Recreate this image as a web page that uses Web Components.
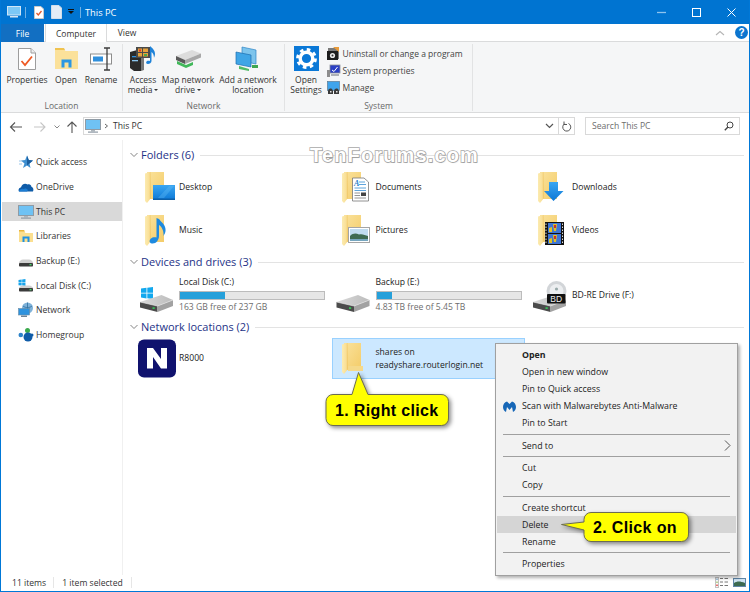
<!DOCTYPE html>
<html><head><meta charset="utf-8">
<style>
html,body{margin:0;padding:0;background:#fff}
body{width:750px;height:592px;overflow:hidden;font:8.6px "Open Sans","Noto Sans",sans-serif;color:#222}
</style></head>
<body>
<explorer-window>
  <title-bar slot="top" label="This PC"></title-bar>
  <ribbon-tabs slot="top"></ribbon-tabs>
  <ribbon-bar slot="top">
    <ribbon-group label="Location" w="122" pad="6" gap="8">
      <ribbon-button icon="properties" w="40">Properties</ribbon-button>
      <ribbon-button icon="open" w="22">Open</ribbon-button>
      <ribbon-button icon="rename" w="32">Rename</ribbon-button>
    </ribbon-group>
    <ribbon-group label="Network" w="162" pad="6" gap="4">
      <ribbon-button icon="media" w="28" caret>Access<br>media</ribbon-button>
      <ribbon-button icon="mapdrive" w="54" caret>Map network<br>drive</ribbon-button>
      <ribbon-button icon="addnet" w="58">Add a network<br>location</ribbon-button>
    </ribbon-group>
    <ribbon-group label="System" w="188" pad="5" gap="5">
      <ribbon-button icon="settings" w="32">Open<br>Settings</ribbon-button>
      <ribbon-list>
        <ribbon-small icon="uninstall">Uninstall or change a program</ribbon-small>
        <ribbon-small icon="sysprop">System properties</ribbon-small>
        <ribbon-small icon="manage">Manage</ribbon-small>
      </ribbon-list>
    </ribbon-group>
  </ribbon-bar>
  <address-bar slot="top" label="This PC" search="Search This PC"></address-bar>
  <nav-pane slot="left">
    <nav-item icon="n-star">Quick access</nav-item>
    <nav-item icon="n-cloud">OneDrive</nav-item>
    <nav-item icon="n-pc" selected>This PC</nav-item>
    <nav-item icon="n-lib">Libraries</nav-item>
    <nav-item icon="n-hdd">Backup (E:)</nav-item>
    <nav-item icon="n-win">Local Disk (C:)</nav-item>
    <nav-item icon="n-net">Network</nav-item>
    <nav-item icon="n-home">Homegroup</nav-item>
  </nav-pane>
  <content-pane slot="main">
    <item-group label="Folders (6)" line="54" row="43">
      <file-tile icon="f-desktop">Desktop</file-tile>
      <file-tile icon="f-docs">Documents</file-tile>
      <file-tile icon="f-down">Downloads</file-tile>
      <file-tile icon="f-music">Music</file-tile>
      <file-tile icon="f-pics">Pictures</file-tile>
      <file-tile icon="f-video">Videos</file-tile>
    </item-group>
    <item-group label="Devices and drives (3)" row="44">
      <drive-tile icon="d-c" name="Local Disk (C:)" free="163 GB free of 237 GB" pct="31"></drive-tile>
      <drive-tile icon="d-e" name="Backup (E:)" free="4.83 TB free of 5.45 TB" pct="11"></drive-tile>
      <file-tile icon="d-bd">BD-RE Drive (F:)</file-tile>
    </item-group>
    <item-group label="Network locations (2)" row="41">
      <file-tile icon="n-logo">R8000</file-tile>
      <file-tile icon="f-plain" selected>shares on<br>readyshare.routerlogin.net</file-tile>
    </item-group>
  </content-pane>
  <status-bar slot="bottom"></status-bar>

  <water-mark slot="over">TenForums.com</water-mark>
  <context-menu slot="over">
    <menu-item bold>Open</menu-item>
    <menu-item>Open in new window</menu-item>
    <menu-item>Pin to Quick access</menu-item>
    <menu-item mb>Scan with Malwarebytes Anti-Malware</menu-item>
    <menu-item>Pin to Start</menu-item>
    <menu-sep></menu-sep>
    <menu-item arrow>Send to</menu-item>
    <menu-sep></menu-sep>
    <menu-item>Cut</menu-item>
    <menu-item>Copy</menu-item>
    <menu-sep></menu-sep>
    <menu-item>Create shortcut</menu-item>
    <menu-item hot>Delete</menu-item>
    <menu-item>Rename</menu-item>
    <menu-sep></menu-sep>
    <menu-item>Properties</menu-item>
  </context-menu>
  <call-out slot="over" kind="one">1. Right click</call-out>
  <call-out slot="over" kind="two">2. Click on</call-out>
</explorer-window>

<script>
const hdd=(x=0,y=0)=>`<g transform="translate(${x} ${y})"><path d="M0 7 21.5 0 33 5 17.500 11Z" fill="url(#hg)"/><path d="M0 7 17.500 11V17L0 12.500Z" fill="#4b4b4b"/><path d="M17.500 11 33 5V11L17.500 17Z" fill="#a2a2a2"/><path d="M0 7 17.500 11 33 5" fill="none" stroke="#e9e9e9" stroke-width=".6"/><rect x="12.500" y="12.300" width="2.200" height="1.600" fill="#35d05a"/></g>`;
const grads=`<defs><linearGradient id="hg" x1="0" y1="0" x2="1" y2="0"><stop offset="0" stop-color="#dadada"/><stop offset="1" stop-color="#bcbcbc"/></linearGradient>
<linearGradient id="fb" x1="0" y1="0" x2="1" y2="1"><stop offset="0" stop-color="#fae29c"/><stop offset="1" stop-color="#f4cc68"/></linearGradient>
<linearGradient id="ff" x1="0" y1="0" x2="1" y2="0"><stop offset="0" stop-color="#fcebb0"/><stop offset=".7" stop-color="#f9df96"/><stop offset="1" stop-color="#eec25c"/></linearGradient>
<linearGradient id="bl" x1="0" y1="0" x2="0" y2="1"><stop offset="0" stop-color="#3aa6f2"/><stop offset="1" stop-color="#0c78d6"/></linearGradient></defs>`;
const folder=`<path d="M11 6H28V33H11Z" fill="url(#fb)"/><path d="M9 7.500 14.500 6 15 32 11 37 9 35Z" fill="url(#ff)"/>`;
const s16=(b)=>({w:16,h:16,vb:'0 0 16 16',b});
const t43=(b)=>({w:43,h:43,vb:'0 0 43 43',b});
const winLogo=(x,y,s,c='#10a5ec')=>`<g fill="${c}" transform="translate(${x} ${y}) scale(${s})"><path d="M0 1.600 5.500.8V5.700H0ZM6.300.7 12 0V5.700H6.300ZM0 6.500H5.500V11.400L0 10.600ZM6.300 6.500H12V12L6.300 11.300Z"/></g>`;
const ICONS={
 'tb-pc':{w:14,h:12,vb:'0 0 14 12',b:`<rect x=".5" y=".5" width="13" height="8.500" fill="#7cc8f6" stroke="#cfe6f7"/><rect x="3" y="10" width="8" height="1.500" fill="#d6e6f2"/>`},
 'tb-check':{w:10,h:13,vb:'0 0 10 13',b:`<path d="M.5.500H7L9.500 3V12.500H.5Z" fill="#fff" stroke="#c9c9c9"/><path d="M2.500 7 4.300 9 7.500 5" fill="none" stroke="#e2592c" stroke-width="1.300"/>`},
 'tb-doc':{w:11,h:14,vb:'0 0 11 14',b:`<path d="M.5.500H8L10.500 3V13.500H.5Z" fill="#e3ecf6" stroke="#d2deeb"/>`},
 properties:{w:18,h:22,vb:'0 0 18 22',b:`<path d="M.5.500H13L17.500 5V21.500H.5Z" fill="#fff" stroke="#9d9d9d"/><path d="M13 .5V5H17.500" fill="#eee" stroke="#9d9d9d"/><path d="M3.500 13 7 17 14 8.500" fill="none" stroke="#ee5a24" stroke-width="1.800"/>`},
 open:{w:23,h:21,vb:'0 0 23 21',b:`<path d="M0 1H9L10.500 3H23V21H0Z" fill="#fbe19a"/><path d="M0 0H9L10 2H0Z" fill="#f0c350"/><path d="M6.500 19.500V11.500H16.500V19.500H13.500V14.500H9.500V19.500Z" fill="#2b97e3"/>`},
 rename:{w:23,h:24,vb:'0 0 23 24',b:`<rect x=".5" y="7" width="21" height="10" fill="#fff" stroke="#8d8d8d"/><rect x="3" y="9.500" width="10" height="5" fill="#2f8fdc"/><path d="M14 1H20M14 23H20M17 1V23" stroke="#3d3d3d" stroke-width="1.300" fill="none"/>`},
 media:{w:26,h:25,vb:'0 0 26 25',b:`<path d="M0 6 11 3V25H4L0 22Z" fill="#2b2b2b"/><path d="M11 3 14 5V24L11 25Z" fill="#777"/><rect x="2" y="10" width="6" height="1.300" fill="#2f8fdc"/><rect x="2" y="14" width="6" height="1.300" fill="#8cc6ef"/><path d="M6 1H20V12H6Z" fill="#4a4a4a"/><path d="M8 2.500H12V6H8ZM13 2.500H18V6H13ZM8 7H12V10.500H8ZM13 7H18V10.500H13Z" fill="#e5a13a"/><path d="M9 3.500H11V5.500H9Z" fill="#d33"/><path d="M14 8H17V10H14Z" fill="#49a84a"/><path d="M20 0C22 2 25 4 25 8 25 10 24 11 24 12 24 9 23 7 21.500 6V15C21.500 17 19.500 18 18 18 16 18 15.500 16 17 15 18 14.500 19 14.500 20 15Z" fill="#1e82d8"/>`},
 mapdrive:{w:25,h:18,vb:'0 0 25 18',b:`<path d="M0 6 16 0 25 3.500 9 10Z" fill="#dcdcdc"/><path d="M0 6 9 10V14L0 10Z" fill="#5a5a5a"/><path d="M9 10 25 3.500V7.500L9 14Z" fill="#a8a8a8"/><path d="M1 11 10 15 17 12 17 15 10 18 1 14Z" fill="#41b85a"/>`},
 addnet:{w:24,h:24,vb:'0 0 24 24',b:`<path d="M6 0 20 3V17L6 14Z" fill="#7dc4ec" stroke="#2f85c6" stroke-width=".7"/><path d="M0 5 15 8V20L0 17Z" fill="#3fa5e6" stroke="#1d6fb0" stroke-width=".7"/><path d="M3 19 13 22V24L3 22Z" fill="#50bb66"/><path d="M16 18H22V21H16Z" fill="#3ea651"/>`},
 settings:{w:25,h:25,vb:'0 0 25 25',b:`<rect width="25" height="25" fill="#0a78d7"/><circle cx="12.500" cy="12.500" r="6.300" fill="none" stroke="#fff" stroke-width="3.400"/><circle cx="12.500" cy="12.500" r="9" fill="none" stroke="#fff" stroke-width="2.800" stroke-dasharray="3.600 3.470"/>`},
 uninstall:{w:13,h:13,vb:'0 0 13 13',b:`<rect x="1" y="1" width="11" height="11" fill="#7a7a7a"/><path d="M6 0H12V5Z" fill="#e89b3c"/><rect x="0" y="4" width="11" height="9" fill="#1d1d1d"/><circle cx="5.500" cy="8.500" r="2.600" fill="#e8e8e8"/><circle cx="5.500" cy="8.500" r="1" fill="#333"/>`},
 sysprop:{w:13,h:13,vb:'0 0 13 13',b:`<rect x="3" y="1" width="10" height="8" fill="#2a3fc4" stroke="#8b9099" stroke-width=".8"/><path d="M5 6 7 7.500 10.500 3" stroke="#fff" fill="none" stroke-width="1"/><path d="M0 6H3V13H0Z" fill="#8d8d8d"/><rect x="4" y="10" width="8" height="2" fill="#adb1b7"/>`},
 manage:{w:13,h:13,vb:'0 0 13 13',b:`<rect x=".5" y=".5" width="12" height="9" fill="#3fa4ec" stroke="#5b7b94" stroke-width=".7"/><path d="M1 13V10C1 8 3 7.500 4 7.500S6 9 6 10V13ZM7 13V10C7 8 9 7.500 10 7.500S12 9 12 10V13Z" fill="#3a3a3a"/><rect x="3" y="10" width="1.500" height="1.500" fill="#e5e5e5"/><rect x="9" y="10" width="1.500" height="1.500" fill="#e5e5e5"/>`},
 'n-star':s16(`<path d="M9 1.500 10.800 6 15 6.500 11.500 9.500 12.500 14 9 11.500 5 14 6.500 9.500 3 6.500 7.200 6Z" fill="#3e8fd0"/><path d="M9 1.500 10.800 6 15 6.500 11.500 9.500 9 11.500Z" fill="#1c5e9e"/><path d="M1 7H4M1 10H4" stroke="#9ac6ea"/>`),
 'n-cloud':s16(`<path d="M1 12.500C0 11 1 8.500 3 8.500 3.500 5.500 7 3.500 9.500 5.500 12 4.500 13.500 6.500 13.500 8 15 8 16 10.500 15 12.500Z" fill="#0f5ca8"/><path d="M1 12.500C1.500 10.500 3.500 9.500 5.500 10 7 9 9 9.500 10 11L9 12.500Z" fill="#1d7dd3"/>`),
 'n-pc':s16(`<rect x=".5" y="1.500" width="15" height="10" fill="#6fc2f4" stroke="#8f9ba5"/><rect x="6" y="12" width="4" height="1.500" fill="#aeb6bd"/><rect x="3" y="13.500" width="10" height="1.200" fill="#8f9ba5"/>`),
 'n-lib':s16(`<path d="M1 3H6L7.500 5H15V14H1Z" fill="#fbdf90"/><path d="M1 2H6L7 3.500H1Z" fill="#e9b53b"/><path d="M4.500 14V8.500H11.500V14H9.500V10.500H6.500V14Z" fill="#1e91e3"/>`),
 'n-hdd':s16(`<path d="M1 10C1 8.500 3 6.500 5 6.500H11C13 6.500 15 8.500 15 10Z" fill="#d0d0d0"/><rect x="1" y="10" width="14" height="3.500" rx=".8" fill="#3b3b3b"/><rect x="11.500" y="11" width="2" height="1.300" fill="#48d86a"/>`),
 'n-win':s16(`${winLogo(0.5,1,0.58,'#18a4ea')}<path d="M1 10C1 9 3 7.500 5 7.500H11C13 7.500 15 9 15 10Z" fill="#d0d0d0"/><rect x="1" y="10" width="14" height="3.500" rx=".8" fill="#3b3b3b"/><rect x="11.500" y="11" width="2" height="1.300" fill="#48d86a"/>`),
 'n-net':s16(`<circle cx="9.500" cy="6" r="5.500" fill="#7fb2d9"/><path d="M5 4C7 6 12 6 14 4M9.500.5V11" stroke="#2f6e9e" stroke-width=".8" fill="none"/><rect x=".5" y="6.500" width="11" height="6.500" fill="#2e93de" stroke="#6b8ca5" stroke-width=".6"/><rect x="3" y="13.500" width="6" height="1.500" fill="#6e8496"/>`),
 'n-home':s16(`<circle cx="2.800" cy="8" r="2.300" fill="#2d83c9"/><circle cx="9.500" cy="3.500" r="2.500" fill="#3aaa4c"/><circle cx="10" cy="10" r="4.500" fill="#0f5ca8"/><circle cx="14" cy="8" r="1.500" fill="#0f5ca8"/>`),
 'f-desktop':t43(`${folder}<rect x="17" y="19" width="22" height="15" fill="url(#bl)"/><path d="M17 32.500H39V34H17Z" fill="#0d5fa8"/><path d="M22 32 33 20H38L28 32Z" fill="#63bdf6" opacity=".35"/>`),
 'f-docs':t43(`${folder}<path d="M19.500 12H31L35.500 16V35H19.500Z" fill="#fff" stroke="#777" stroke-width=".8"/><text x="21" y="20" font-family="Liberation Serif" font-style="italic" font-weight="700" font-size="8" fill="#2d80c8">A</text><path d="M26 16H32M26 18.500H33M21.500 22H33M21.500 24.500H33" stroke="#4d9ad8" stroke-width=".9"/><path d="M21.500 27H27M21.500 29.500H27M21.500 32H33" stroke="#888" stroke-width=".9"/><rect x="28" y="26.500" width="5" height="3.500" fill="#444"/>`),
 'f-down':t43(`${folder}<path d="M20 16H29V25H34.500L24.500 35 15 25H20Z" fill="url(#bl)"/>`),
 'f-music':t43(`${folder}<path d="M23 10V27C23 31 20 35 16 34.500 12.500 34 13 30 16.500 28.500 18 28 19.500 28 20.500 28.500V9L23 10C25 13 29 15 29.500 20 30 23 28.500 25 27.500 27 28 22 26 18 23 16Z" fill="#1e8ae0"/>`),
 'f-pics':t43(`${folder}<rect x="15.500" y="18.500" width="21" height="15" fill="#fff" stroke="#a5a5a5"/><rect x="17" y="20" width="18" height="12" fill="#c0dcf0"/><path d="M17 27C20 24 23 24 26 25.500 29 24.500 32 26 35 27V32H17Z" fill="#3e6b52"/><path d="M17 30H35V32H17Z" fill="#76a6bf"/>`),
 'f-video':t43(`${folder}<rect x="16" y="13" width="19" height="23" fill="#111"/><rect x="19" y="14" width="13" height="10" fill="#3f75d5"/><rect x="19" y="25" width="13" height="10" fill="#3f75d5"/><path d="M24 15H28L27 22H25ZM20 19 23 18V23H20ZM24 26H28L27 33H25ZM20 30 23 29V34H20Z" fill="#e3c223"/><path d="M25 16H27V19H25ZM25 27H27V30H25Z" fill="#c8302a"/><path d="M17 14.500V35M33.500 14.500V35" stroke="#ddd" stroke-width="1" stroke-dasharray="1.500 1.500"/>`),
 'f-plain':t43(`<path d="M11 6H28V33H11Z" fill="url(#fb)"/><path d="M9 7.500 14.500 6 15 32 11 37 9 35Z" fill="url(#ff)"/><path d="M15 29H30V34H15Z" fill="#f5d98a"/>`),
 'd-c':t43(`${winLogo(5,13,1,'#12a8ee')}${hdd(4,21)}`),
 'd-e':t43(hdd(4.500,21)),
 'd-bd':t43(`<circle cx="27.500" cy="17" r="10" fill="#d2d5d8"/><circle cx="27.500" cy="17" r="7" fill="#eceef0"/><circle cx="27.500" cy="15" r="1.600" fill="#9aa"/>${hdd(4,21)}<rect x="18" y="20" width="18.500" height="9.500" rx="1" fill="#111"/><text x="27.200" y="28" text-anchor="middle" font-family="Liberation Sans" font-size="8.500" fill="#eee">BD</text>`),
 'n-logo':t43(`<rect x="2" y="2.500" width="38" height="38" rx="6" fill="#10126e"/><path d="M11 31.500V11H17L25 22V11H31V31.500H25L17 20V31.500Z" fill="#fff"/>`),
 'mb':{w:13,h:13,vb:'0 0 13 13',b:`<path d="M6.500 4 4 1.500C1.500 2 0 4.500 0 7 0 9.500 1.500 11.500 3 12L4 7 6.500 10 9 7 10 12C11.500 11.500 13 9.500 13 7 13 4.500 11.500 2 9 1.500Z" fill="#1767b7"/>`},
 'v-det':{w:13,h:11,vb:'0 0 13 11',b:`<rect x=".5" y=".5" width="3" height="10" fill="#fff" stroke="#c2c2c2"/><rect x="1.200" y="1.500" width="1.600" height="1.600" fill="#8fb3d3"/><rect x="1.200" y="4.500" width="1.600" height="1.600" fill="#a9c77a"/><rect x="1.200" y="7.500" width="1.600" height="1.600" fill="#e0524d"/><path d="M5 1.500H8M9.500 1.500H13M5 5H8M9.500 5H13M5 8.500H8M9.500 8.500H13" stroke="#777"/>`},
 'v-lg':{w:13,h:9,vb:'0 0 13 9',b:`<rect x=".5" y=".5" width="12" height="8" fill="#cfe3f3" stroke="#5f86a8"/><path d="M1 5C4 3 7 3 12 5V8H1Z" fill="#3c6a50"/>`},
};
function def(tag,css,html,init){
  customElements.define(tag,class extends HTMLElement{
    connectedCallback(){
      if(this.shadowRoot)return;
      const r=this.attachShadow({mode:'open'});
      r.innerHTML=`<style>${css}</style>`+(typeof html==='function'?html(this):html);
      if(init)init(this,r);
    }
  });
}
const svgIcon=n=>{const i=ICONS[n];return `<svg width="${i.w}" height="${i.h}" viewBox="${i.vb}" style="display:block;overflow:visible">${grads}${i.b}</svg>`};

def('explorer-window',`
 :host{display:block;position:relative;width:750px;height:592px;box-sizing:border-box;border:solid #0078d7;border-width:0 1px 1px 1px;background:#fff;overflow:hidden}
 .g{display:grid;height:100%;grid-template-rows:auto 1fr auto}
 .m{display:grid;grid-template-columns:122px 1fr;min-height:0}
`,`<div class="g"><div><slot name="top"></slot></div><div class="m"><slot name="left"></slot><slot name="main"></slot></div><slot name="bottom"></slot></div><slot name="over"></slot>`);

def('title-bar',`
 :host{display:flex;align-items:center;height:24px;background:#0074d1;color:#fff;font-size:9.300px;margin:0 -1px}
 .sep{width:1px;height:11px;background:#6fb0e4}
 .caret{width:0;height:0;border:solid transparent;border-width:3px 3px 0;border-top-color:#111;margin-top:1px;position:relative}
 .caret:before{content:"";position:absolute;left:-3px;top:-5px;width:6px;height:1px;background:#111}
 .t{margin-left:4px;flex:1}
 .w{display:flex}
 .b{width:35px;height:24px;display:grid;place-items:center}
`,h=>`<div style="width:7px"></div><div>${svgIcon('tb-pc')}</div><div style="width:4px"></div><div class="sep"></div><div style="width:8px"></div><div>${svgIcon('tb-check')}</div><div style="width:7px"></div><div>${svgIcon('tb-doc')}</div><div style="width:6px"></div><div class="caret"></div><div style="width:6px"></div><div class="sep"></div><div class="t">${h.getAttribute('label')}</div>
 <div class="w"><div class="b"><svg width="9" height="9"><path d="M0 4.500H9" stroke="#8fc4ee" stroke-width="1.300"/></svg></div><div class="b"><svg width="9" height="9"><rect x=".5" y=".5" width="8" height="8" fill="none" stroke="#fff"/></svg></div><div class="b"><svg width="9" height="9"><path d="M.5.500 8.500 8.500M8.500.5.500 8.500" stroke="#fff"/></svg></div></div><div style="width:1px"></div>`);

def('ribbon-tabs',`
 :host{display:flex;height:18px;box-sizing:border-box;border-bottom:1px solid #dadbdc;background:#fff;align-items:stretch;font-size:8.500px;color:#333}
 div{display:grid;place-items:center}
 .f{width:43px;background:#126fc2;color:#fff;margin-bottom:-1px}
 .c{width:60px;border:solid #dadbdc;border-width:0 1px;margin-bottom:-1px;background:#fff;margin-left:1px}
 .v{width:40px}
 .sp{flex:1}
 .h{width:13px;height:13px;border-radius:50%;background:#0b75cf;color:#fff;font:bold 10px "Liberation Sans";margin:2px 0 0 10px;align-self:start}
`,`<div class="f">File</div><div class="c">Computer</div><div class="v">View</div><div class="sp"></div><svg width="10" height="18" style="display:block"><path d="M1 11 5 7.500 9 11" fill="none" stroke="#b5b5b5" stroke-width="1.100"/></svg><div class="h">?</div><div style="width:1px"></div>`);

def('ribbon-bar',`:host{display:flex;height:71px;box-sizing:border-box;background:#f5f6f7;border-bottom:1px solid #dadbdc;padding-top:2px;font-size:8.500px}`,`<slot></slot>`);

def('ribbon-group',`
 :host{display:grid;grid-template-rows:1fr 11px;box-sizing:border-box;border-right:1px solid #e2e3e4;margin-bottom:1px}
 .c{display:flex;align-items:flex-start;min-height:0}
 .l{text-align:center;color:#6a6a6a;line-height:11px;height:11px}
`,h=>`<div class="c"><slot></slot></div><div class="l">${h.getAttribute('label')}</div>`,
 (h,r)=>{h.style.width=h.getAttribute('w')+'px';const c=r.querySelector('.c');c.style.paddingLeft=h.getAttribute('pad')+'px';c.style.gap=h.getAttribute('gap')+'px';});

def('ribbon-button',`
 :host{display:flex;flex-direction:column;align-items:center;color:#333;line-height:10.300px;text-align:center;white-space:nowrap}
 .i{height:29px;display:flex;align-items:center;justify-content:center;margin-bottom:2px}
 .car{display:inline-block;width:0;height:0;border:solid transparent;border-width:2.500px 2px 0;border-top-color:#333;vertical-align:2px;margin-left:2px}
`,h=>`<div class="i">${svgIcon(h.getAttribute('icon'))}</div><div><slot></slot>${h.hasAttribute('caret')?'<span class="car"></span>':''}</div>`,
 (h)=>{h.style.width=h.getAttribute('w')+'px'});
def('ribbon-list',`:host{display:flex;flex-direction:column;padding-top:1px}`,`<slot></slot>`);
def('ribbon-small',`:host{display:flex;align-items:center;gap:2.500px;height:17px;color:#444;white-space:nowrap}`,h=>`${svgIcon(h.getAttribute('icon'))}<slot></slot>`);

def('address-bar',`
 :host{display:flex;align-items:center;height:27px;background:#fff;padding-bottom:1px;box-sizing:border-box;color:#333}
 .nav{width:82px;flex:none;display:block}
 .box{display:flex;align-items:center;height:18px;box-sizing:border-box;border:1px solid #d9d9d9}
 .a{width:476px;gap:2px;padding-left:1px}
 .r{width:17px;justify-content:center;margin-left:-1px}
 .s{width:155px;margin-left:10px;padding:0 5px 0 6px;justify-content:space-between;color:#6d6d6d}
 .chev{margin-left:auto;margin-right:4px}
`,h=>`<svg class="nav" height="27" viewBox="0 0 82 27"><path d="M21 14H10M14 9.500 9.500 14 14 18.500" fill="none" stroke="#555" stroke-width="1.100"/><path d="M44 14H33M39.500 9.500 44 14 39.500 18.500" fill="none" stroke="#c6c6c6" stroke-width="1.100"/><path d="M53.500 12.500 56 15 58.500 12.500" fill="none" stroke="#888"/><path d="M71 20V9M66.500 13.500 71 9 75.500 13.500" fill="none" stroke="#555" stroke-width="1.100"/></svg>
 <div class="box a">${svgIcon('n-pc')}<svg width="7" height="10"><path d="M2 3 4.500 5 2 7" fill="none" stroke="#666"/></svg><span style="margin-left:1px">${h.getAttribute('label')}</span><svg class="chev" width="9" height="8"><path d="M1 2 4.500 5.500 8 2" fill="none" stroke="#555" stroke-width="1.200"/></svg></div>
 <div class="box r"><svg width="11" height="11" viewBox="0 0 11 11"><path d="M3.500 2.800A4 4 0 1 0 7.500 2.500" fill="none" stroke="#555"/><path d="M3 .5V3.500H6" fill="none" stroke="#555"/></svg></div>
 <div class="box s"><span>${h.getAttribute('search')}</span><svg width="10" height="10" viewBox="0 0 10 10"><circle cx="6" cy="4" r="3" fill="none" stroke="#444"/><path d="M4 6 .8 9.200" stroke="#444" stroke-width="1.400"/></svg></div>`);

def('nav-pane',`:host{display:block;box-sizing:border-box;padding-top:10px;border-right:1px solid #f0f0f0;width:122px}`,`<slot></slot>`);
def('nav-item',`
 :host{display:block;height:24.700px;padding:2.850px 0;box-sizing:border-box;color:#333}
 .r{display:flex;align-items:center;height:19px;margin:0 0 0 1px;padding-left:16px;gap:2px}
 :host([selected]) .r{background:#d9d9d9}
`,h=>`<div class="r">${svgIcon(h.getAttribute('icon'))}<slot></slot></div>`);

def('content-pane',`:host{display:block;padding:7px 5px 0 6.500px;min-width:0;overflow:hidden;}`,`<slot></slot>`);
def('item-group',`
 :host{display:block;margin-bottom:2px}
 .h{display:flex;align-items:center;height:16px;color:#1e3287;font-size:11px;white-space:nowrap}
 .h svg{margin-right:3.500px}
 .h span{padding-bottom:2px}
 .ln{flex:1;height:1px;background:#e3e3e3;margin-left:6px}
 .g{display:grid;grid-template-columns:repeat(3,196.500px);margin:3px 0 0 5.500px}
`,h=>`<div class="h"><svg width="8" height="6" viewBox="0 0 8 6"><path d="M.5 1 4 4.500 7.500 1" fill="none" stroke="#777" stroke-width=".9"/></svg><span>${h.getAttribute('label')}</span><div class="ln"></div></div><div class="g"><slot></slot></div>`,
 (h,r)=>{r.querySelector('.g').style.gridAutoRows=h.getAttribute('row')+'px'});
def('file-tile',`
 :host{display:flex;align-items:center;width:193px;box-sizing:border-box;color:#222;line-height:13px;white-space:nowrap;border:1px solid transparent;margin:0}
 :host([selected]){background:#cce8ff;border-color:#99d1ff}
 .i{flex:none;width:43px;height:43px}
`,h=>`<div class="i">${svgIcon(h.getAttribute('icon'))}</div><div><slot></slot></div>`);
def('drive-tile',`
 :host{display:flex;align-items:center;width:193px;color:#222}
 .i{flex:none;width:44px;height:43px;padding-left:.5px;box-sizing:border-box}
 .t{display:flex;flex-direction:column;width:146px}
 .n{line-height:13px;height:13px}
 .b{height:9px;box-sizing:border-box;border:1px solid #bcbcbc;background:#e6e6e6;margin:2px 0 1px}
 .b i{display:block;height:100%;background:#26a0da}
 .f{color:#6d6d6d;line-height:13px;height:13px}
`,h=>`<div class="i">${svgIcon(h.getAttribute('icon'))}</div><div class="t"><div class="n">${h.getAttribute('name')}</div><div class="b"><i style="width:${h.getAttribute('pct')}%"></i></div><div class="f">${h.getAttribute('free')}</div></div>`);

def('status-bar',`
 :host{display:flex;align-items:center;height:16px;box-sizing:border-box;padding:0 3px 1px 11px;background:#fff;color:#333}
 i{width:1px;height:11px;background:#e6e6e6;display:block}
 .sp{flex:1}
`,`<span>11 items</span><i style="margin:0 8px 0 7px"></i><span>1 item selected</span><i style="margin-left:8px"></i><div class="sp"></div>${svgIcon('v-det')}<div style="width:5px"></div>${svgIcon('v-lg')}`);

def('water-mark',`
 :host{position:absolute;left:309px;top:144px;font:bold 20px "Liberation Sans",sans-serif;letter-spacing:1.150px;color:#fff;-webkit-text-stroke:1.500px #a9a9a9;paint-order:stroke;white-space:nowrap;line-height:22px;text-shadow:1px 1px 1px rgba(0,0,0,.12)}
`,`<slot></slot>`);
def('context-menu',`
 :host{position:absolute;left:494px;top:343px;width:243px;box-sizing:border-box;background:#f2f2f2;border:1px solid #a0a0a0;padding:2.500px 1px;box-shadow:2px 2px 3px rgba(0,0,0,.3);color:#222;font-size:8.800px}
`,`<slot></slot>`);
def('menu-item',`
 :host{display:flex;align-items:center;height:17px;padding-left:25px;position:relative;white-space:nowrap}
 :host([bold]){font-weight:700}
 :host([hot]){background:#d5d5d5}
 .m{position:absolute;left:6px;top:2px}
 .a{position:absolute;right:5px;top:3px}
`,h=>`${h.hasAttribute('mb')?`<div class="m">${svgIcon('mb')}</div>`:''}<slot></slot>${h.hasAttribute('arrow')?'<svg class="a" width="7" height="11"><path d="M1 .5 6 5.500 1 10.500" fill="none" stroke="#555"/></svg>':''}`);
def('menu-sep',`:host{display:flex;align-items:center;height:5.500px;padding:0 6px}div{height:1px;background:#a0a0a0;flex:1}`,`<div></div>`);
def('call-out',`
 :host{position:absolute;display:block;font:bold 16px "Liberation Sans",sans-serif;color:#000;white-space:nowrap;letter-spacing:.35px}
 :host([kind=one]){left:324px;top:372px;width:127px;height:56px}
 :host([kind=two]){left:559px;top:512px;width:131px;height:31px}
 svg{position:absolute;left:0;top:0;overflow:visible;filter:drop-shadow(2px 2px 2px rgba(0,0,0,.45))}
 .t{position:absolute}
 :host([kind=one]) .t{left:10px;top:30px}
 :host([kind=two]) .t{left:33px;top:7px}
`,h=>h.getAttribute('kind')==='one'
 ?`<svg width="127" height="56"><path d="M8 22.500H27L33.500 .5 43 22.500H116A7 7 0 0 1 123.500 29.500V46A7 7 0 0 1 116.500 53.500H8A7 7 0 0 1 1 46.500V29.500A7 7 0 0 1 8 22.500Z" fill="#ffff00" stroke="#6b6b52" stroke-width="1"/></svg><div class="t"><slot></slot></div>`
 :`<svg width="131" height="31"><path d="M31 .5H121A7 7 0 0 1 128.500 7.500V22A7 7 0 0 1 121.500 29.500H31A7 7 0 0 1 24 22.500V18L1.500 12.500 24 10V7.500A7 7 0 0 1 31 .5Z" fill="#ffff00" stroke="#6b6b52" stroke-width="1"/></svg><div class="t"><slot></slot></div>`);
</script>
</body></html>
